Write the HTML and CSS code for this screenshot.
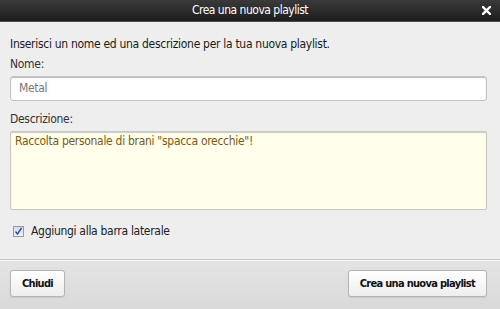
FILE: index.html
```html
<!DOCTYPE html>
<html lang="it">
<head>
    <meta charset="UTF-8">
    <link rel="stylesheet" href="styles.css">
</head>
<body>
    <div class="dialog">
        <div class="dialog-title">
            <span class="title-text">Crea una nuova playlist</span>
            <span class="close-btn">
                <svg width="9" height="9" viewBox="0 0 9 9">
                    <path d="M1 1 L8 8 M8 1 L1 8" stroke="#fff" stroke-width="2.4" stroke-linecap="square"/>
                </svg>
            </span>
        </div>
        <div class="dialog-body">
            <div class="intro">Inserisci un nome ed una descrizione per la tua nuova playlist.</div>
            <label class="field-label">Nome:</label>
            <div class="text-input">Metal</div>
            <label class="field-label desc-label">Descrizione:</label>
            <div class="text-area">Raccolta personale di brani "spacca orecchie"!</div>
            <div class="check-row">
                <span class="checkbox">
                    <svg width="9" height="9" viewBox="0 0 9 9">
                        <path d="M1.5 4.5 L3.5 7 L7.5 1" fill="none" stroke="#2b4f9e" stroke-width="1.4"/>
                    </svg>
                </span>
                <span class="check-label">Aggiungi alla barra laterale</span>
            </div>
        </div>
        <div class="dialog-footer">
            <button class="btn">Chiudi</button>
            <button class="btn">Crea una nuova playlist</button>
        </div>
    </div>
</body>
</html>
```

FILE: styles.css
```css
html, body {
    margin: 0;
    padding: 0;
    height: 100%;
    background: #eeeeee;
    font-family: "DejaVu Sans Condensed", "DejaVu Sans", sans-serif;
    font-size: 12px;
    letter-spacing: -0.3px;
    color: #222;
}

.dialog {
    display: flex;
    flex-direction: column;
    width: 500px;
    height: 309px;
    overflow: hidden;
}

.dialog-title {
    position: relative;
    height: 21px;
    line-height: 21px;
    background: linear-gradient(#3a3a3a, #1d1d1d);
    border-bottom: 1px solid #4c4c4c;
    color: #fff;
    text-align: center;
    font-size: 12px;
    letter-spacing: -0.5px;
}

.close-btn {
    position: absolute;
    right: 9px;
    top: 6px;
    width: 9px;
    height: 9px;
    line-height: 0;
}

.dialog-body {
    flex: 1;
    display: flex;
    flex-direction: column;
    padding: 15px 13px 0 10px;
}

.intro {
    line-height: 15px;
    color: #1a1a1a;
}

.field-label {
    line-height: 15px;
    margin-top: 5px;
    color: #333;
}

.desc-label {
    margin-top: 11px;
}

.text-input {
    margin-top: 4px;
    height: 23px;
    line-height: 23px;
    padding: 0 8px;
    background: #fff;
    border: 1px solid #c4c4c4;
    border-radius: 3px;
    box-shadow: inset 0 1px 1px #bbb;
    color: #777;
}

.text-area {
    margin-top: 4px;
    height: 73px;
    padding: 2px 4px;
    line-height: 15px;
    background: #ffffec;
    border: 1px solid #c8c8c0;
    border-radius: 2px;
    box-shadow: inset 0 1px 1px #ccc;
    color: #7a5a10;
}

.check-row {
    display: flex;
    align-items: center;
    gap: 7px;
    margin-top: 14px;
    padding-left: 3px;
    line-height: 15px;
}

.checkbox {
    display: flex;
    align-items: center;
    justify-content: center;
    width: 9px;
    height: 9px;
    border: 1px solid #8f9bb0;
    background: linear-gradient(#d6dbe4, #f2f4f8);
}

.check-label {
    color: #222;
}

.dialog-footer {
    height: 50px;
    display: flex;
    justify-content: space-between;
    align-items: flex-start;
    padding: 10px 13px 0 10px;
    box-sizing: border-box;
    background: linear-gradient(#e4e4e4, #d9d9d9);
    border-top: 1px solid #c6c6c6;
    box-shadow: inset 0 1px 0 #f6f6f6;
}

.btn {
    height: 27px;
    padding: 0 11px;
    font-family: "DejaVu Sans Condensed", "DejaVu Sans", sans-serif;
    font-size: 11px;
    font-weight: bold;
    letter-spacing: -0.7px;
    color: #111;
    background: linear-gradient(#ffffff, #eeeeee);
    border: 1px solid #b4b4b4;
    border-radius: 3px;
    box-shadow: 0 1px 1px #c8c8c8;
}
```
